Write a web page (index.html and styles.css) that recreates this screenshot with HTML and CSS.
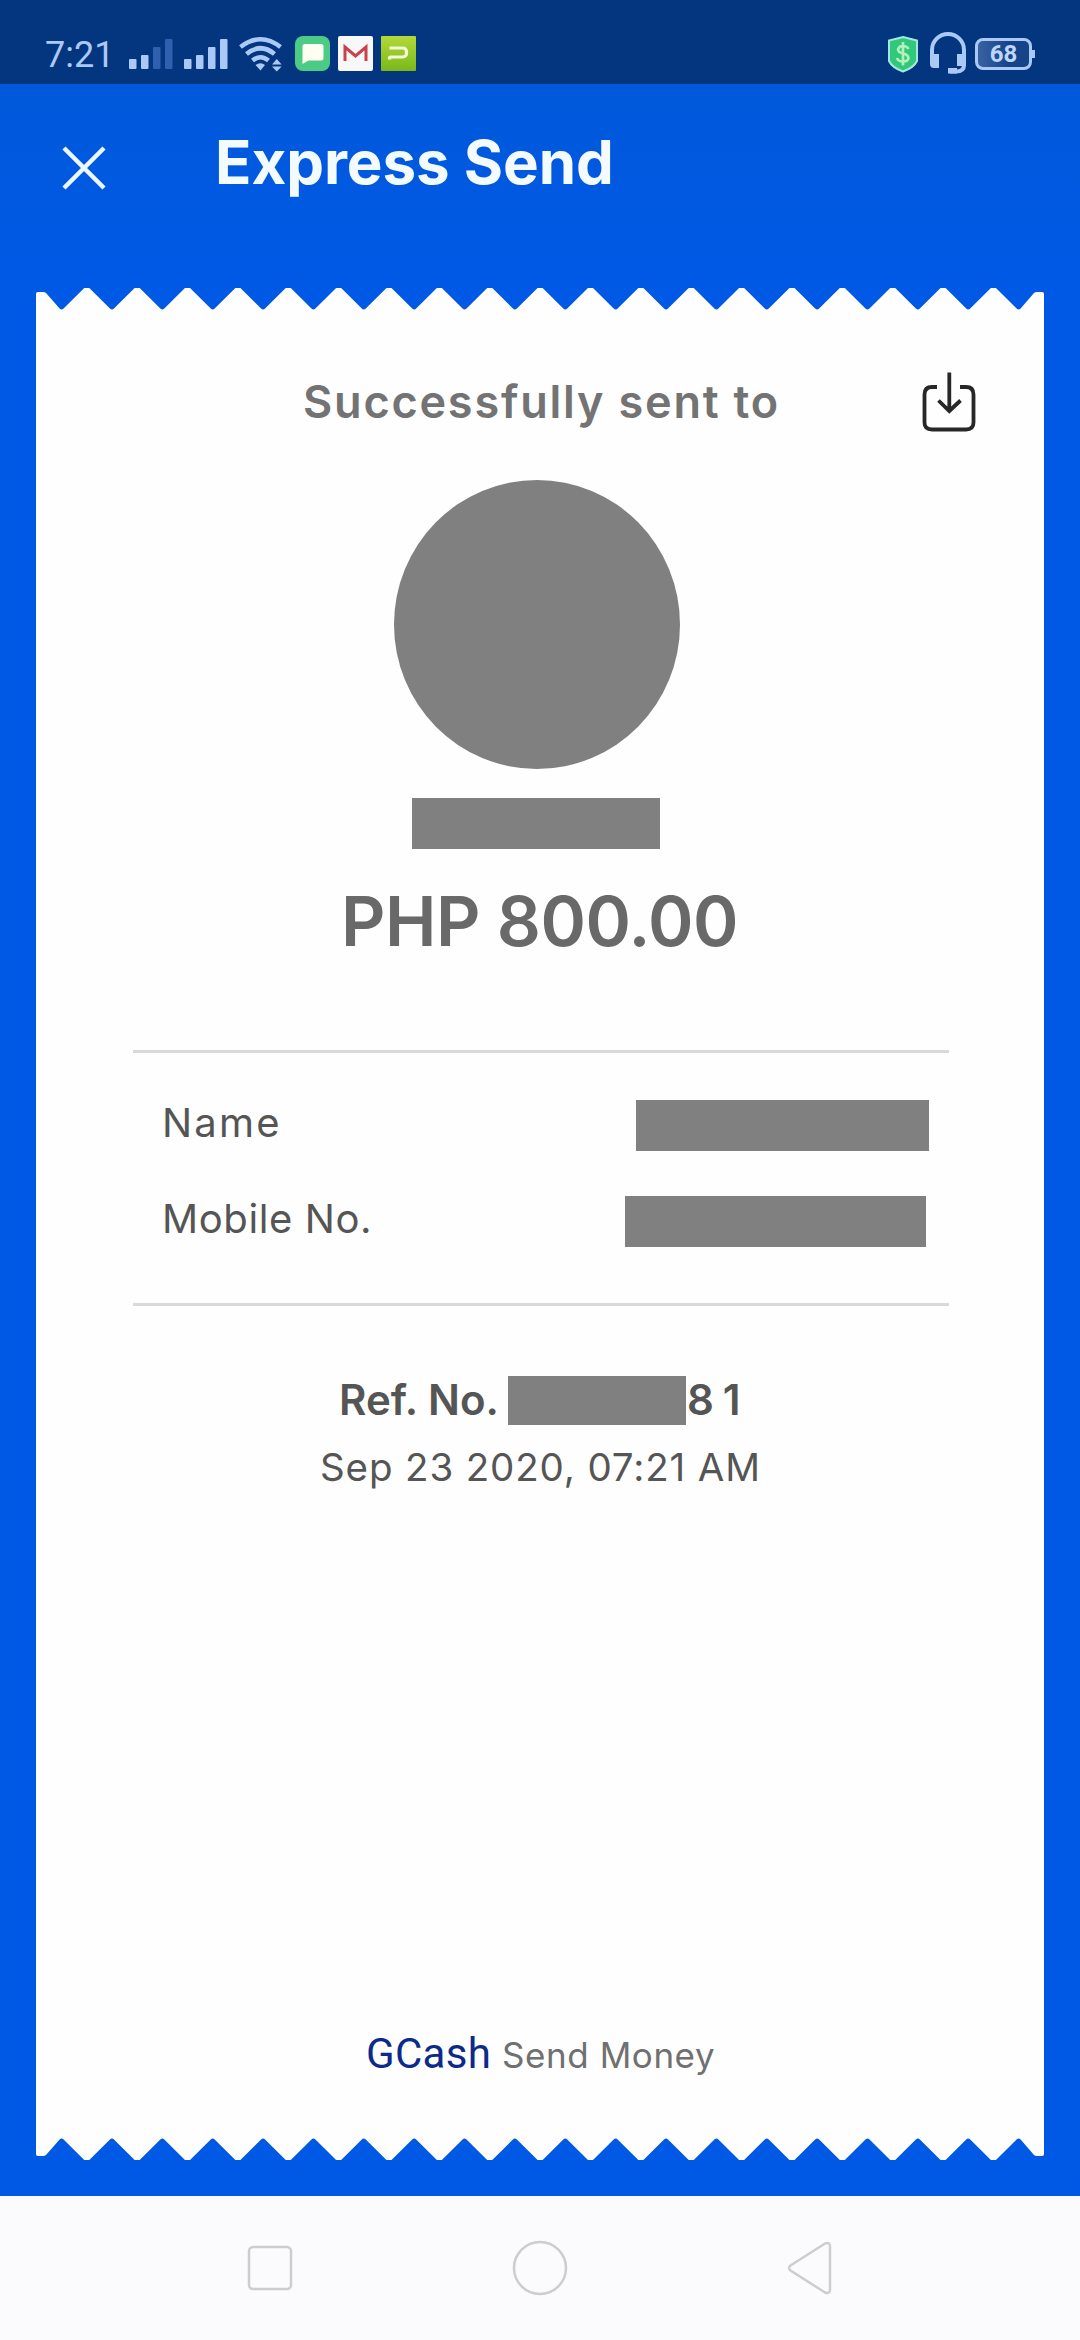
FILE: index.html
```html
<!DOCTYPE html>
<html lang="en">
<head>
<meta charset="utf-8">
<title>Express Send</title>
<link rel="stylesheet" href="styles.css">
</head>
<body>
<div class="status-bar">
  <span class="clock">7:21</span>
  <svg class="signal" width="44" height="44" viewBox="0 0 44 44"><g fill="#abc9f6"><rect y="27" width="7.5" height="10" rx="1"/><rect x="12" y="23" width="7.5" height="14" rx="1"/></g><g fill="#2f5fae"><rect x="24" y="15" width="7.5" height="22" rx="1"/><rect x="36" y="7" width="7.5" height="30" rx="1"/></g></svg>
  <svg class="signal-full" width="44" height="44" viewBox="0 0 44 44"><g fill="#abc9f6"><rect y="27" width="7.5" height="10" rx="1"/><rect x="12" y="23" width="7.5" height="14" rx="1"/><rect x="24" y="15" width="7.5" height="22" rx="1"/><rect x="36" y="7" width="7.5" height="30" rx="1"/></g></svg>
  <svg class="wifi" width="44" height="44" viewBox="0 0 44 44"><g fill="none" stroke="#abc9f6" stroke-width="4.6"><path d="M1.5 15Q21.500-.5 41.500 15"/><path d="M7.500 22Q21.500 10.500 35.500 22"/><path d="M13.500 28.500Q21.500 22 29.500 28.500"/></g><path fill="#abc9f6" d="M16.500 33Q21.500 29.500 26 33L21.500 38.500zM33 32.500l4.800-5.500 4.800 5.500zM33 34.500h9.600L37.800 39.500z"/></svg>
  <svg class="app" width="35" height="44" viewBox="0 0 35 44"><rect y="4" width="35" height="35" rx="8" fill="#4ccb86"/><path fill="#fdfff0" d="M9.500 12h16.500a2.500 2.500 0 0 1 2.500 2.500v11.500a2.500 2.500 0 0 1-2.500 2.500H13.500L7.500 32V14.500a2.500 2.500 0 0 1 2-2.500z"/></svg>
  <svg class="app" width="35" height="44" viewBox="0 0 35 44"><rect y="4" width="35" height="35" rx="2" fill="#f8f8f8"/><path d="M7 29V15l10.500 9L28 15v14" fill="none" stroke="#c5434a" stroke-width="3"/></svg>
  <svg class="app" width="35" height="44" viewBox="0 0 35 44"><defs><linearGradient id="lime" x1="0" y1="0" x2="0" y2="1"><stop stop-color="#b4d936"/><stop offset="1" stop-color="#79b81c"/></linearGradient></defs><rect y="4" width="35" height="35" rx="1" fill="url(#lime)"/><path d="M8.500 16H22a3.500 3.500 0 0 1 3.500 3.500v2A3.500 3.500 0 0 1 22 25H9.500a1 1 0 0 0-1 1v1.500" fill="none" stroke="#f4fbd8" stroke-width="3.200"/></svg>
  <svg class="shield" width="32" height="44" viewBox="0 0 32 44"><path d="M16 5l14 3.500V29q-3 6.500-14 10.500Q5 35.500 2 29V8.500z" fill="#30c97c" stroke="#a4e6e0" stroke-width="2"/><path d="M21.500 17q-1.500-3-5.500-3t-5 3.300q0 3 5 4.200t5.500 4.500q-.5 3.500-5.500 3.500t-6-3.500M16 10v23.500" fill="none" stroke="#b6f1bd" stroke-width="2.600"/></svg>
  <svg class="headset" width="38" height="44" viewBox="0 0 38 44"><path d="M3 28V18a16 16 0 0 1 32 0v15q0 6.500-8 6.500h-6" fill="none" stroke="#abc9f6" stroke-width="4"/><path d="M1 22h9v14H5q-4 0-4-4zM28 22h9v12h-9zM19 36h9v5.500h-9z" fill="#abc9f6"/></svg>
  <div class="battery"><span class="battery-level">68</span></div>
</div>
<header class="header">
  <svg class="close" width="44" height="44" viewBox="0 0 44 44"><path d="M2 2l40 40M42 2L2 42" fill="none" stroke="#eef7ff" stroke-width="4.500"/></svg>
  <h1 class="title">Express Send</h1>
</header>
<main class="receipt">
  <svg class="edge" width="1008" height="22" viewBox="0 0 1008 22">
    <path id="teeth" fill="#fefefe" d="M0 22V6q0-2 2-2h5q2 0 3 1L23.600 20.500q2 2 4 0L50.780-2.500
      l23.170 23q2 2 4 0l23.200-23 23.170 23q2 2 4 0l23.200-23 23.170 23q2 2 4 0l23.200-23
      23.170 23q2 2 4 0l23.200-23 23.170 23q2 2 4 0l23.200-23 23.170 23q2 2 4 0l23.200-23
      23.170 23q2 2 4 0l23.200-23 23.170 23q2 2 4 0l23.200-23 23.170 23q2 2 4 0l23.200-23
      23.170 23q2 2 4 0l23.200-23 23.170 23q2 2 4 0l23.200-23 23.170 23q2 2 4 0l23.200-23
      23.170 23q2 2 4 0l23.200-23 23.170 23q2 2 4 0l23.200-23 23.170 23q2 2 4 0l23.200-23
      23.170 23q2 2 4 0l23.200-23 23.170 23q2 2 4 0l23.200-23 23.170 23q2 2 4 0l23.200-23
      23.170 23q2 2 4 0L998 5q1-1 3-1h5q2 0 2 2v16z"/>
  </svg>
  <div class="receipt-body">
    <div class="heading-row">
      <h2 class="heading">Successfully sent to</h2>
      <svg class="download" width="56" height="62" viewBox="0 0 56 62"><path d="M16 17h-5q-7.500 0-7.500 7.500v28q0 7 7.500 7h34q7.500 0 7.500-7v-28q0-7.500-7.500-7.500H39M28.300 2.500v37M17.500 30.500l10.800 10.500L39.500 30.500" fill="none" stroke="#272727" stroke-width="3.800"/></svg>
    </div>
    <div class="avatar"></div>
    <div class="redacted recipient"></div>
    <div class="amount">PHP 800.00</div>
    <div class="details">
      <div class="detail"><span class="label label-name">Name</span><span class="redacted value-name"></span></div>
      <div class="detail"><span class="label">Mobile No.</span><span class="redacted value-mobile"></span></div>
    </div>
    <div class="reference"><span class="reference-label">Ref. No.</span><span class="redacted reference-hidden"></span><span class="reference-end">8 1</span></div>
    <div class="date">Sep 23 2020, 07:21 AM</div>
    <div class="brand-row"><span class="brand">GCash</span><span class="service">Send Money</span></div>
  </div>
  <svg class="edge edge-bottom" width="1008" height="22" viewBox="0 0 1008 22"><use href="#teeth"/></svg>
</main>
<nav class="nav-bar">
  <svg width="60" height="60" viewBox="0 0 60 60"><rect x="9" y="9" width="42" height="42" rx="4" fill="none" stroke="#cdcdcd" stroke-width="2.500"/></svg>
  <svg width="60" height="60" viewBox="0 0 60 60"><circle cx="30" cy="30" r="26" fill="none" stroke="#cdcdcd" stroke-width="2.500"/></svg>
  <svg width="60" height="60" viewBox="0 0 60 60"><path d="M10.500 27.500L45 5.500q5-2 5 3v43q0 5-5 3L10.500 32.500q-3-2.500 0-5z" fill="none" stroke="#cdcdcd" stroke-width="2.500"/></svg>
</nav>
</body>
</html>
```
FILE: styles.css
```css
* { box-sizing: border-box; }
body {
  margin: 0;
  width: 1080px;
  height: 2340px;
  display: flex;
  flex-direction: column;
  font-family: Inter, sans-serif;
  background: #0059e5;
}
svg { display: block; flex: none; }
h1, h2 { margin: 0; font-weight: 600; }

.status-bar {
  height: 84px;
  padding: 24px 45px 0;
  display: flex;
  align-items: center;
  background: #03367f;
  color: #abc9f6;
  font-family: Roboto, sans-serif;
}
.clock { width: 84px; padding-top: 2px; font-size: 36px; line-height: 44px; }
.signal { margin-right: 11px; }
.signal-full { margin-right: 11px; }
.wifi { margin-right: 12px; }
.app { margin-right: 8px; }
.shield { margin-left: auto; margin-right: 10px; }
.headset { margin-right: 8px; }
.battery {
  position: relative;
  width: 57px;
  height: 32px;
  margin-right: 3px;
  border: 3px solid #abc9f6;
  border-radius: 8px;
  display: flex;
  align-items: center;
  justify-content: center;
  background: linear-gradient(90deg, #3a62a2, #174488 60%);
}
.battery::after {
  content: "";
  position: absolute;
  right: -6px;
  top: 9px;
  width: 3px;
  height: 8px;
  background: #abc9f6;
}
.battery-level { font-size: 24px; font-weight: 700; line-height: 26px; color: #bdd6fb; }

.header {
  height: 204px;
  padding: 0 63px 48px 62px;
  display: flex;
  align-items: center;
  background: linear-gradient(#0059da, #0059e5);
}
.close { margin-top: 12px; }
.title {
  margin-left: 109px;
  font-size: 60px;
  font-weight: 700;
  line-height: 70px;
  letter-spacing: -0.05px;
  color: #f3fbff;
}

.receipt { width: 1008px; margin: 0 36px; }
.edge-bottom { transform: scaleY(-1); }
.receipt-body {
  height: 1828px;
  padding: 60px 0 58px;
  display: flex;
  flex-direction: column;
  background: #fefefe;
}
.heading-row {
  height: 62px;
  margin: 0 67px 0 267px;
  display: flex;
  align-items: center;
  justify-content: space-between;
}
.heading { font-size: 45px; letter-spacing: 1.8px; color: #737373; }
.redacted { background: #808080; }
.avatar {
  width: 286px;
  height: 289px;
  margin: 48px 0 0 358px;
  border-radius: 50%;
  background: #808080;
}
.recipient { width: 248px; height: 51px; margin: 29px 0 0 376px; }
.amount {
  margin: 32px 0 0 305px;
  font-size: 69px;
  font-weight: 600;
  line-height: 80px;
  letter-spacing: -0.52px;
  color: #696969;
}
.details {
  width: 816px;
  margin: 89px 0 0 97px;
  padding: 47px 0 56px 29px;
  display: grid;
  gap: 45px;
  border-top: 3px solid #d9d9d9;
  border-bottom: 3px solid #d9d9d9;
}
.detail {
  height: 51px;
  display: flex;
  align-items: center;
  justify-content: space-between;
}
.label { padding-bottom: 6px; font-size: 40px; letter-spacing: 0.6px; color: #555; }
.label-name { letter-spacing: 2.2px; }
.value-name { width: 293px; height: 51px; margin-right: 20px; }
.value-mobile { width: 301px; height: 51px; margin-right: 23px; }
.reference {
  height: 49px;
  margin: 70px 0 0 303px;
  display: flex;
  font-size: 42px;
  font-weight: 600;
  line-height: 47px;
  color: #555;
}
.reference-label { width: 169px; letter-spacing: 0.05px; }
.reference-hidden { width: 178px; }
.reference-end { padding-left: 1px; letter-spacing: -0.9px; }
.date {
  margin: 20px 0 0 284px;
  font-size: 38.5px;
  line-height: 45px;
  letter-spacing: 0.87px;
  color: #555;
}
.brand-row {
  margin: auto 0 0 330px;
  display: flex;
  align-items: baseline;
  gap: 11px;
  line-height: 50px;
}
.brand { font-family: Roboto, sans-serif; font-size: 42px; letter-spacing: 0.3px; color: #0c2a8a; }
.service { font-size: 35px; letter-spacing: 0.55px; color: #707070; }

.nav-bar {
  height: 144px;
  margin-top: 36px;
  padding: 0 240px;
  display: flex;
  align-items: center;
  justify-content: space-between;
  background: #fbfafc;
}
```
